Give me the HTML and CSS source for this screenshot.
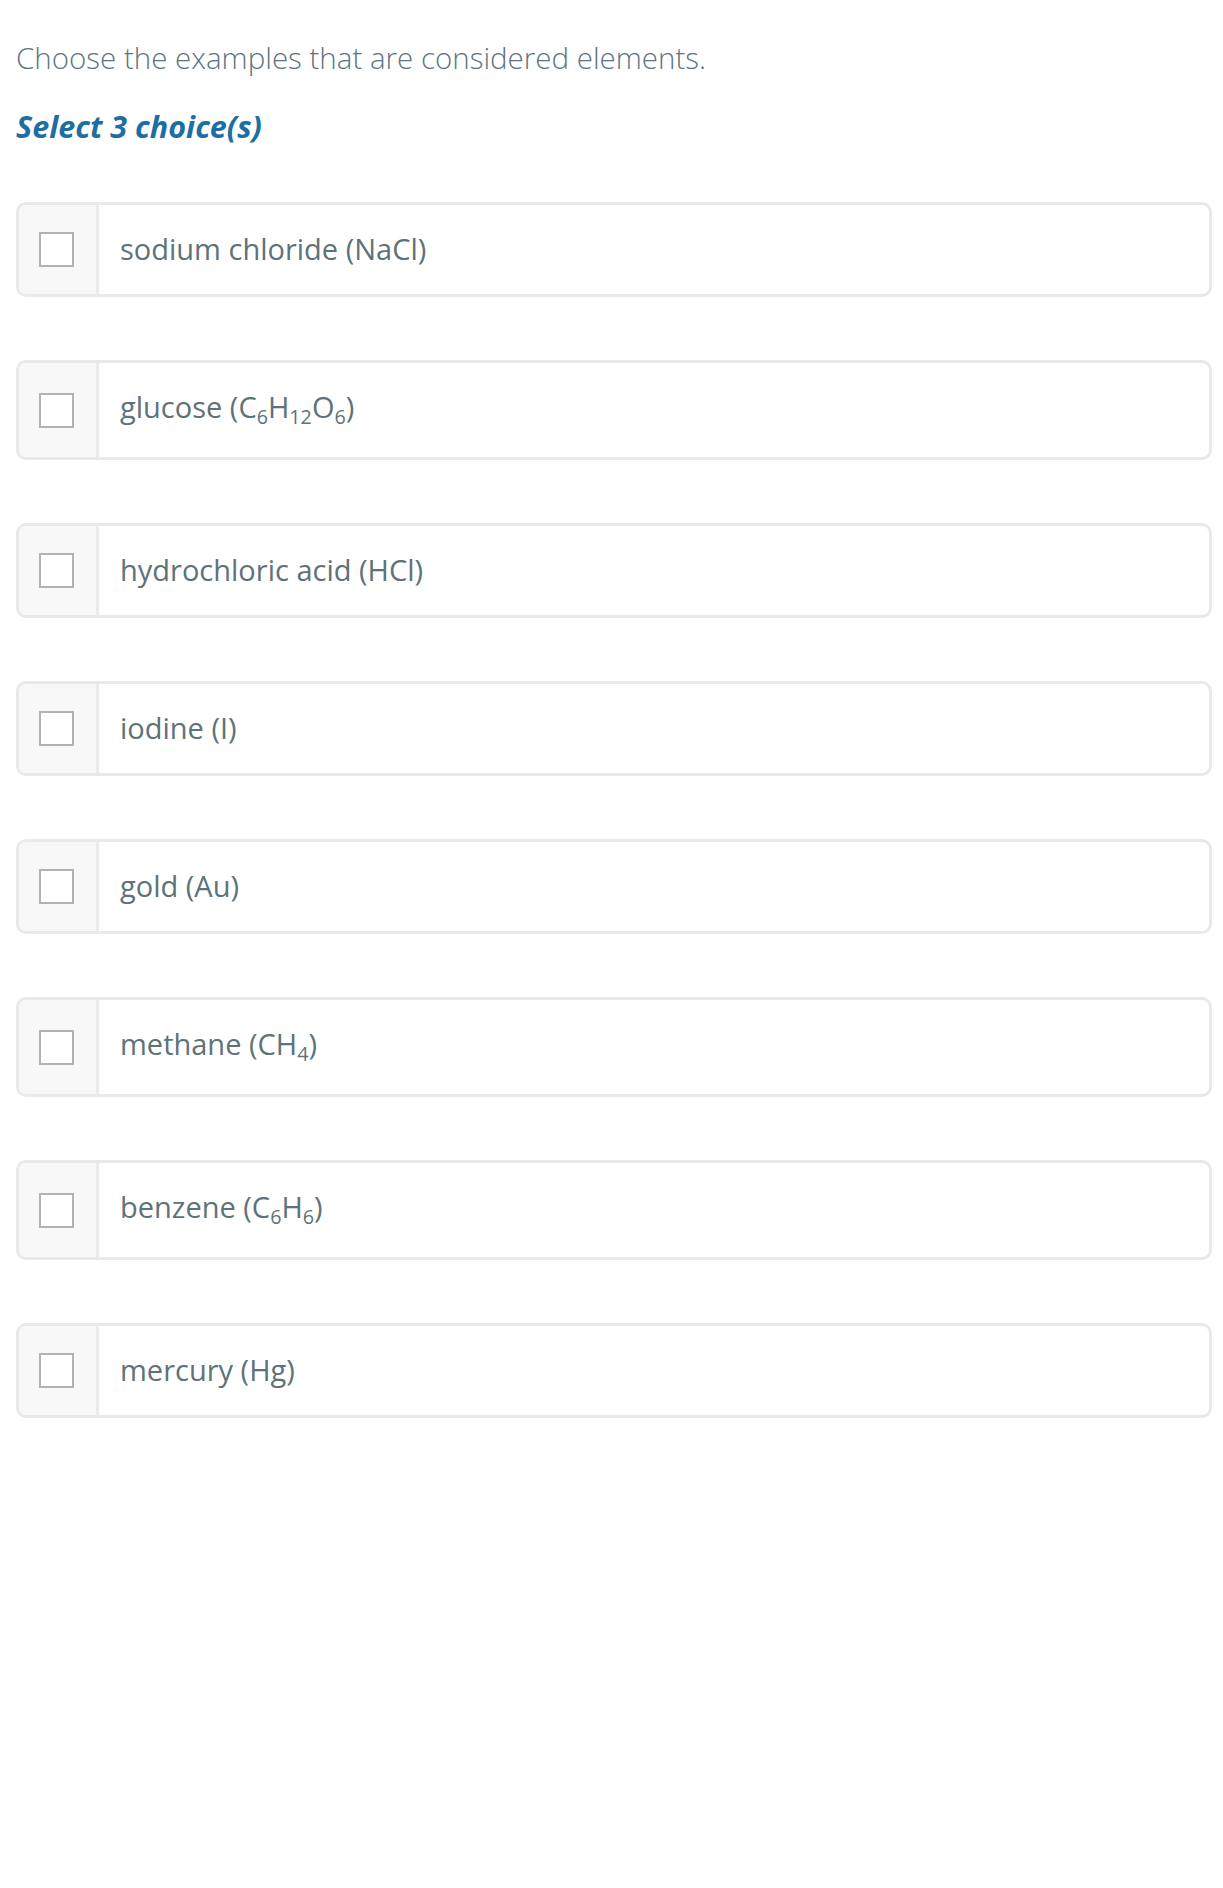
FILE: index.html
```html
<!DOCTYPE html>
<html lang="en">
<head>
<meta charset="utf-8">
<title>Choose elements</title>
<link rel="stylesheet" href="styles.css">
</head>
<body>
<main class="page">
  <p class="question">Choose the examples that are considered elements.</p>
  <p class="instruction">Select 3 choice(s)</p>
  <ul class="choices">
    <li class="choice"><span class="check-cell"><span class="box"></span></span><span class="label">sodium chloride (NaCl)</span></li>
    <li class="choice"><span class="check-cell"><span class="box"></span></span><span class="label">glucose (C<sub>6</sub>H<sub>12</sub>O<sub>6</sub>)</span></li>
    <li class="choice"><span class="check-cell"><span class="box"></span></span><span class="label">hydrochloric acid (HCl)</span></li>
    <li class="choice"><span class="check-cell"><span class="box"></span></span><span class="label">iodine (I)</span></li>
    <li class="choice"><span class="check-cell"><span class="box"></span></span><span class="label">gold (Au)</span></li>
    <li class="choice"><span class="check-cell"><span class="box"></span></span><span class="label">methane (CH<sub>4</sub>)</span></li>
    <li class="choice"><span class="check-cell"><span class="box"></span></span><span class="label">benzene (C<sub>6</sub>H<sub>6</sub>)</span></li>
    <li class="choice"><span class="check-cell"><span class="box"></span></span><span class="label">mercury (Hg)</span></li>
  </ul>
</main>
</body>
</html>
```
FILE: styles.css
```css
html, body {
  margin: 0;
  padding: 0;
  background: #ffffff;
}

.page {
  padding: 38px 11px 0 16px;
  font-family: "Open Sans", "Noto Sans", sans-serif;
}

.question {
  margin: 0;
  font-size: 29.5px;
  line-height: 40px;
  font-weight: 300;
  color: #607480;
}

.instruction {
  margin: 28px 0 0 0;
  font-size: 30.5px;
  line-height: 40px;
  font-weight: 700;
  font-style: italic;
  color: #1d6fa3;
}

.choices {
  list-style: none;
  margin: 56px 0 0 0;
  padding: 0;
  display: flex;
  flex-direction: column;
  gap: 63px;
}

.choice {
  display: flex;
  border: 3px solid #e9e9e9;
  border-radius: 10px;
  overflow: hidden;
  background: #ffffff;
}

.check-cell {
  width: 77px;
  flex: none;
  display: flex;
  align-items: center;
  background: #f8f8f8;
  border-right: 3px solid #ebebeb;
}

.box {
  width: 31px;
  height: 31px;
  margin-left: 20px;
  border: 2px solid #b2b2b2;
  background: #ffffff;
}

.label {
  flex: 1;
  padding: 26px 20px 28px 21px;
  font-size: 29px;
  line-height: 35px;
  color: #5e7279;
}

.label sub {
  font-size: 0.68em;
  line-height: 24px;
  vertical-align: -6px;
}
```
